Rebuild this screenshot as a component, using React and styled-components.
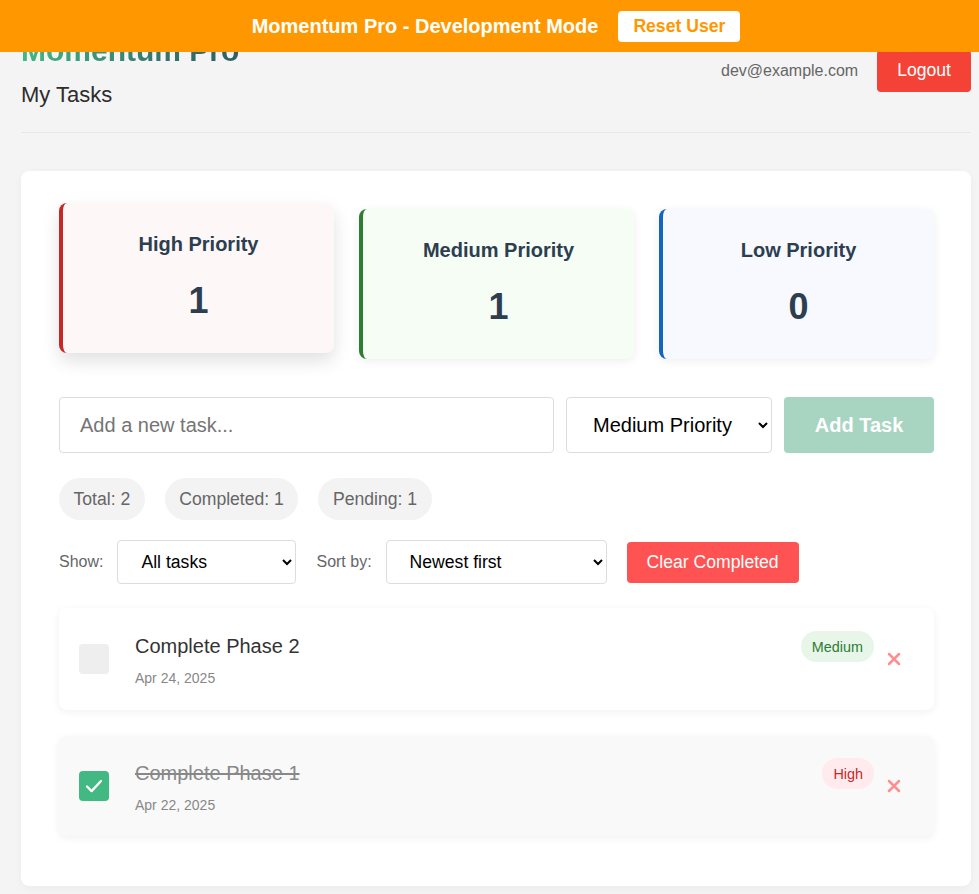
import React from "react";
import styled, { createGlobalStyle } from "styled-components";

const GlobalStyle = createGlobalStyle`
  html, body {
    margin: 0;
    padding: 0;
    overflow: hidden;
    background: #f4f4f4;
    font-family: "Liberation Sans", Arial, sans-serif;
  }
  * {
    box-sizing: border-box;
  }
`;

const PAGE_WIDTH = 992;

const DevBanner = styled.div`
  position: fixed;
  top: 0;
  left: 0;
  width: ${PAGE_WIDTH}px;
  height: 52px;
  background: #ff9800;
  display: flex;
  align-items: center;
  justify-content: center;
  gap: 20px;
  z-index: 10;

  span {
    color: #fff;
    font-weight: 700;
    font-size: 20px;
  }
`;

const ResetButton = styled.button`
  background: #fff;
  color: #ff9800;
  border: none;
  border-radius: 4px;
  font-family: inherit;
  font-weight: 700;
  font-size: 17.6px;
  height: 31px;
  padding: 0 15px;
`;

const Page = styled.div`
  width: ${PAGE_WIDTH}px;
  padding: 0 21px 40px;
`;

const Header = styled.header`
  display: flex;
  align-items: center;
  justify-content: space-between;
  padding: 33px 0 24px;
  border-bottom: 1px solid #e8e8e8;
  margin-bottom: 38px;
`;

const Brand = styled.div`
  h1 {
    margin: 0;
    font-size: 30px;
    line-height: 36px;
    font-weight: 700;
    background: linear-gradient(90deg, #42b983 0%, #35796f 60%, #2f5f62 100%);
    -webkit-background-clip: text;
    background-clip: text;
    color: transparent;
    display: inline-block;
  }

  p {
    margin: 13px 0 0;
    font-size: 22px;
    line-height: 26px;
    color: #2c2c2c;
  }
`;

const UserArea = styled.div`
  display: flex;
  align-items: center;
  gap: 19px;

  span {
    font-size: 16px;
    color: #666;
  }
`;

const LogoutButton = styled.button`
  background: #f44336;
  color: #fff;
  border: none;
  border-radius: 4px;
  font-family: inherit;
  font-size: 17.6px;
  height: 42px;
  padding: 0 20px;
`;

const MainCard = styled.main`
  background: #fff;
  border-radius: 8px;
  box-shadow: 0 2px 10px rgba(0, 0, 0, 0.04);
  padding: 38px 37px 50px 38px;
`;

const PriorityGrid = styled.div`
  display: grid;
  grid-template-columns: repeat(3, 1fr);
  gap: 25px;
  margin-bottom: 38px;
`;

const PriorityCard = styled.div`
  background: ${(p) => p.$bg};
  border-left: 4px solid ${(p) => p.$accent};
  border-radius: 8px;
  text-align: center;
  padding: 29px 20px 31px;
  color: #2c3e50;
  transform: ${(p) => (p.$raised ? "translateY(-6px)" : "none")};
  box-shadow: ${(p) =>
    p.$raised
      ? "0 8px 18px rgba(0, 0, 0, 0.12)"
      : "0 2px 10px rgba(0, 0, 0, 0.07)"};

  h3 {
    margin: 0;
    font-size: 20px;
    line-height: 24px;
    font-weight: 700;
  }

  div {
    margin-top: 23px;
    font-size: 36px;
    line-height: 43px;
    font-weight: 700;
  }
`;

const AddRow = styled.form`
  display: flex;
  gap: 12px;
  margin-bottom: 25px;
`;

const TaskInput = styled.input`
  flex: 1;
  height: 56px;
  border: 1px solid #ddd;
  border-radius: 4px;
  padding: 0 20px;
  font-family: inherit;
  font-size: 20px;
  color: #333;

  &::placeholder {
    color: #757575;
  }
`;

const Select = styled.select`
  height: ${(p) => p.$height}px;
  width: ${(p) => p.$width}px;
  border: 1px solid #ddd;
  border-radius: 4px;
  background: #fff;
  padding: 0 8px 0 ${(p) => p.$padLeft}px;
  font-family: inherit;
  font-size: ${(p) => p.$size}px;
  color: #000;
`;

const AddButton = styled.button`
  width: 150px;
  height: 56px;
  border: none;
  border-radius: 4px;
  background: #a8d5c2;
  color: #fff;
  font-family: inherit;
  font-weight: 700;
  font-size: 20px;
`;

const StatsRow = styled.div`
  display: flex;
  gap: 20px;
  margin-bottom: 20px;
`;

const StatPill = styled.span`
  height: 42px;
  display: flex;
  align-items: center;
  padding: 0 14.5px;
  border-radius: 21px;
  background: #f3f3f3;
  color: #666;
  font-size: 17.6px;
`;

const FilterRow = styled.div`
  display: flex;
  align-items: center;
  gap: 20px;
  margin-bottom: 24px;
`;

const FilterGroup = styled.label`
  display: flex;
  align-items: center;
  gap: 14px;
  font-size: 16px;
  color: #666;
`;

const ClearButton = styled.button`
  height: 41px;
  padding: 0 20px;
  border: none;
  border-radius: 4px;
  background: #ff5252;
  color: #fff;
  font-family: inherit;
  font-size: 17.6px;
`;

const TaskList = styled.ul`
  list-style: none;
  margin: 0;
  padding: 0;
  display: flex;
  flex-direction: column;
  gap: 26px;
`;

const TaskItem = styled.li`
  display: flex;
  align-items: center;
  padding: ${(p) => (p.$done ? "22px 20px" : "23px 20px")};
  border-radius: 8px;
  background: ${(p) => (p.$done ? "#f9f9f9" : "#fff")};
  box-shadow: 0 2px 8px rgba(0, 0, 0, 0.06);
`;

const CheckBox = styled.span`
  flex: none;
  width: 30px;
  height: 30px;
  border-radius: 4px;
  background: ${(p) => (p.$checked ? "#42b983" : "#eee")};
  display: flex;
  align-items: center;
  justify-content: center;
  margin-right: 26px;
`;

const TaskBody = styled.div`
  flex: 1;
  min-width: 0;
`;

const TaskTop = styled.div`
  display: flex;
  align-items: center;
  justify-content: space-between;
  height: 31px;
`;

const TaskTitle = styled.span`
  font-size: 20px;
  color: ${(p) => (p.$done ? "#888" : "#333")};
  text-decoration: ${(p) => (p.$done ? "line-through" : "none")};
`;

const TaskDate = styled.div`
  margin-top: 8px;
  font-size: 14px;
  line-height: 17px;
  color: #888;
`;

const badgeColors = {
  high: { bg: "#ffebee", fg: "#c62828" },
  medium: { bg: "#e8f5e9", fg: "#2e7d32" },
  low: { bg: "#e3f2fd", fg: "#1565c0" },
};

const Badge = styled.span`
  height: 31px;
  display: flex;
  align-items: center;
  padding: 0 11px;
  border-radius: 16px;
  font-size: 14.4px;
  background: ${(p) => badgeColors[p.$level].bg};
  color: ${(p) => badgeColors[p.$level].fg};
`;

const DeleteButton = styled.button`
  flex: none;
  width: 40px;
  height: 30px;
  border: none;
  background: transparent;
  display: flex;
  align-items: center;
  justify-content: center;
  padding: 0;
`;

const priorities = [
  { label: "High Priority", count: 1, bg: "#fdf7f7", accent: "#c62828", raised: true },
  { label: "Medium Priority", count: 1, bg: "#f6fdf5", accent: "#2e7d32" },
  { label: "Low Priority", count: 0, bg: "#f7f9fe", accent: "#1565c0" },
];

const tasks = [
  { id: 2, title: "Complete Phase 2", date: "Apr 24, 2025", level: "medium", done: false },
  { id: 1, title: "Complete Phase 1", date: "Apr 22, 2025", level: "high", done: true },
];

const CheckIcon = () => (
  <svg width="18" height="16" viewBox="0 0 18 16" fill="none">
    <path d="M2 8.5l4.6 4.6L16 3" stroke="#fff" strokeWidth="2.3" strokeLinecap="round" strokeLinejoin="round" />
  </svg>
);

const CrossIcon = () => (
  <svg width="14" height="14" viewBox="0 0 14 14">
    <path d="M2 2l10 10M12 2L2 12" stroke="#ff8f8f" strokeWidth="2.5" strokeLinecap="round" />
  </svg>
);

const App = () => {
  return (
    <React.Fragment>
      <GlobalStyle />
      <DevBanner>
        <span>Momentum Pro - Development Mode</span>
        <ResetButton>Reset User</ResetButton>
      </DevBanner>
      <Page>
        <Header>
          <Brand>
            <h1>Momentum Pro</h1>
            <p>My Tasks</p>
          </Brand>
          <UserArea>
            <span>dev@example.com</span>
            <LogoutButton>Logout</LogoutButton>
          </UserArea>
        </Header>

        <MainCard>
          <PriorityGrid>
            {priorities.map((p) => (
              <PriorityCard key={p.label} $bg={p.bg} $accent={p.accent} $raised={p.raised}>
                <h3>{p.label}</h3>
                <div>{p.count}</div>
              </PriorityCard>
            ))}
          </PriorityGrid>

          <AddRow onSubmit={(e) => e.preventDefault()}>
            <TaskInput placeholder="Add a new task..." />
            <Select $width={206} $height={56} $size={20} $padLeft={22} defaultValue="medium">
              <option value="high">High Priority</option>
              <option value="medium">Medium Priority</option>
              <option value="low">Low Priority</option>
            </Select>
            <AddButton type="submit">Add Task</AddButton>
          </AddRow>

          <StatsRow>
            <StatPill>Total: 2</StatPill>
            <StatPill>Completed: 1</StatPill>
            <StatPill>Pending: 1</StatPill>
          </StatsRow>

          <FilterRow>
            <FilterGroup>
              Show:
              <Select $width={179} $height={44} $size={17.6} $padLeft={19} defaultValue="all">
                <option value="all">All tasks</option>
                <option value="active">Active</option>
                <option value="completed">Completed</option>
              </Select>
            </FilterGroup>
            <FilterGroup>
              Sort by:
              <Select $width={221} $height={44} $size={17.6} $padLeft={19} defaultValue="newest">
                <option value="newest">Newest first</option>
                <option value="oldest">Oldest first</option>
                <option value="priority">Priority</option>
              </Select>
            </FilterGroup>
            <ClearButton>Clear Completed</ClearButton>
          </FilterRow>

          <TaskList>
            {tasks.map((task) => (
              <TaskItem key={task.id} $done={task.done}>
                <CheckBox $checked={task.done}>{task.done && <CheckIcon />}</CheckBox>
                <TaskBody>
                  <TaskTop>
                    <TaskTitle $done={task.done}>{task.title}</TaskTitle>
                    <Badge $level={task.level}>
                      {task.level === "high" ? "High" : task.level === "medium" ? "Medium" : "Low"}
                    </Badge>
                  </TaskTop>
                  <TaskDate>{task.date}</TaskDate>
                </TaskBody>
                <DeleteButton aria-label="Delete task">
                  <CrossIcon />
                </DeleteButton>
              </TaskItem>
            ))}
          </TaskList>
        </MainCard>
      </Page>
    </React.Fragment>
  );
};

export default App;
